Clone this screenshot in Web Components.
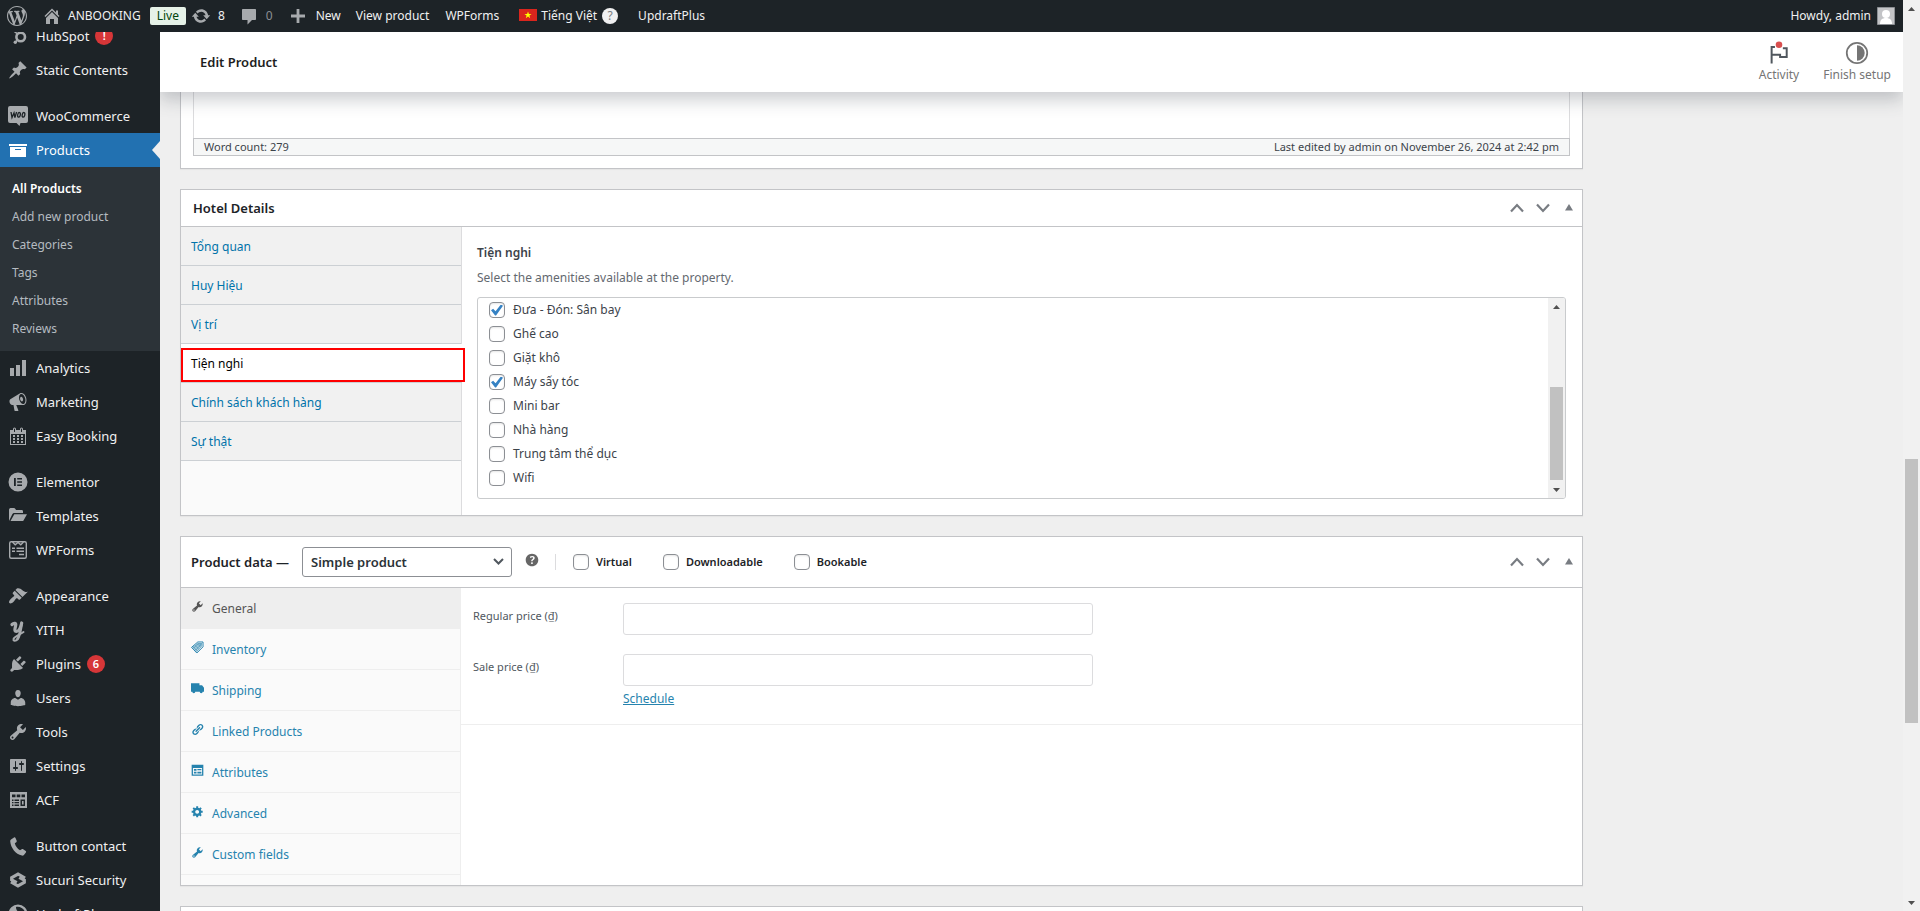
<!DOCTYPE html>
<html lang="en">
<head>
<meta charset="utf-8">
<meta name="viewport" content="width=device-width, initial-scale=1">
<title>Edit Product</title>
<style>
  body { margin: 0; background: #efefef; color: #3c434a; font: 12px/18px "Noto Sans", "Open Sans", sans-serif; }
</style>
</head>
<body>
<admin-app></admin-app>

<script>
const ICONS = {
  wordpress: '<path d="M20 10c0-5.51-4.49-10-10-10C4.48 0 0 4.49 0 10c0 5.52 4.48 10 10 10 5.51 0 10-4.48 10-10zM7.78 15.37L4.37 6.22c.55-.02 1.17-.08 1.17-.08.5-.06.44-1.13-.06-1.11 0 0-1.45.11-2.37.11-.18 0-.37 0-.58-.01C4.12 2.69 6.87 1.11 10 1.11c2.33 0 4.45.87 6.05 2.34-.68-.11-1.65.39-1.65 1.58 0 .74.45 1.36.9 2.1.35.61.55 1.36.55 2.46 0 1.49-1.4 5-1.4 5l-3.03-8.37c.54-.02.82-.17.82-.17.5-.05.44-1.25-.06-1.22 0 0-1.44.12-2.38.12-.87 0-2.33-.12-2.33-.12-.5-.03-.56 1.2-.06 1.22l.92.08 1.26 3.41zM17.41 10c.24-.64.74-1.87.43-4.25.7 1.29 1.05 2.71 1.05 4.25 0 3.29-1.73 6.24-4.4 7.78.97-2.59 1.94-5.2 2.92-7.78zM6.1 18.09C3.12 16.65 1.11 13.53 1.11 10c0-1.3.23-2.48.72-3.59C3.25 10.3 4.67 14.2 6.1 18.09zm4.03-6.63l2.58 6.98c-.86.29-1.76.45-2.71.45-.79 0-1.57-.11-2.29-.33.81-2.38 1.62-4.74 2.42-7.1z"/>',
  home: '<path d="M16 8.5l1.53 1.53-1.06 1.06L10 4.6l-6.47 6.49-1.06-1.06L10 2.5l4 4v-2h2v4zm-6-2.46l6 5.99V18h-4v-5H8v5H4v-5.97z"/>',
  update: '<path d="M10.2 3.28c3.53 0 6.43 2.61 6.92 6h2.08l-3.5 4-3.5-4h2.32c-.45-1.97-2.21-3.45-4.32-3.45-1.45 0-2.73.71-3.54 1.78L4.95 5.66C6.23 4.2 8.11 3.28 10.2 3.28zm-.4 13.44c-3.52 0-6.43-2.61-6.92-6H.8l3.5-4c1.17 1.33 2.33 2.67 3.5 4H5.48c.45 1.97 2.21 3.45 4.32 3.45 1.45 0 2.73-.71 3.54-1.78l1.71 1.95c-1.28 1.46-3.15 2.38-5.25 2.38z"/>',
  comment: '<path d="M4 3h12c.6 0 1 .4 1 1v9c0 .6-.4 1-1 1h-3l-4.500 4.500V14H4c-.6 0-1-.4-1-1V4c0-.6.4-1 1-1z"/>',
  plus: '<path d="M17 8.600v2.800h-5.600V17H8.600v-5.600H3V8.600h5.600V3h2.800v5.600z"/>',
  hubspot: '<circle cx="12.700" cy="11" r="4.300" fill="none" stroke="currentColor" stroke-width="2.600"/><path fill="none" stroke="currentColor" stroke-width="1.600" d="M13 6V2M9.500 8L4 3.500M9.500 14l-2.300 2.300"/><circle cx="7.300" cy="16.300" r="1.700"/><circle cx="13" cy="2" r="1.600"/><circle cx="4" cy="3.500" r="1.600"/>',
  pin: '<path d="M10.44 3.02l1.82-1.82 6.36 6.35-1.83 1.82c-1.05-.68-2.48-.57-3.41.36l-.75.75c-.92.93-1.04 2.35-.35 3.41l-1.83 1.82-2.41-2.41-2.8 2.79c-.42.42-3.38 2.71-3.8 2.29s1.86-3.39 2.28-3.81l2.79-2.79L4.1 9.36l1.83-1.82c1.05.69 2.48.57 3.4-.36l.75-.75c.93-.92 1.05-2.35.36-3.41z"/>',
  woo: '<path d="M2 0h16a2 2 0 0 1 2 2v13a2 2 0 0 1-2 2h-5.500L11.500 20l-3-3H2a2 2 0 0 1-2-2V2a2 2 0 0 1 2-2z"/><g fill="none" stroke="#1d2327" stroke-width="1.300"><path d="M3 6l1 5.500 2-4.500.9 4.500L8.600 6"/><ellipse cx="11" cy="8.800" rx="1.300" ry="2.300" transform="rotate(12 11 8.800)"/><ellipse cx="15.500" cy="8.800" rx="1.300" ry="2.300" transform="rotate(12 15.500 8.800)"/></g>',
  archive: '<path d="M19 4v2H1V4h18zM2 7h16v10H2V7zm11 3V9H7v1h6z"/>',
  chart: '<path d="M18 18V2h-4v16h4zm-6 0V7H8v11h4zm-6 0v-8H2v8h4z"/>',
  megaphone: '<path d="M18.15 5.94c.46 1.62.38 3.22-.02 4.48-.42 1.28-1.26 2.18-2.3 2.48-.16.06-.26.06-.4.06-.06.02-.12.02-.18.02-.06.02-.14.02-.22.02h-6.8l2.22 5.5c.02.14-.06.26-.14.34-.08.1-.24.16-.34.16H6.95c-.1 0-.26-.06-.34-.16-.08-.08-.16-.2-.14-.34l-1-5.5H4.25l-.02-.02c-.5.06-1.08-.18-1.54-.62s-.88-1.08-1.06-1.88c-.24-.8-.2-1.56-.02-2.2.18-.62.58-1.08 1.06-1.3l.02-.02 9-5.4c.1-.06.18-.1.24-.16.06-.04.14-.08.24-.12.16-.08.28-.12.5-.18 1.04-.3 2.24.1 3.22.98s1.84 2.24 2.26 3.86zm-2.58 5.98h-.02c.4-.1.74-.34 1.04-.7.58-.7.86-1.76.86-3.04 0-.64-.1-1.3-.28-1.98-.34-1.36-1.02-2.5-1.78-3.24s-1.68-1.1-2.46-.88c-.82.22-1.4.96-1.7 2-.32 1.04-.28 2.36.06 3.72.38 1.36 1 2.5 1.8 3.24.78.74 1.62 1.1 2.48.88zm-2.54-7.08c.22-.04.42-.02.62.04.38.16.76.48 1.02 1s.42 1.2.42 1.78c0 .3-.04.56-.12.8-.18.48-.44.84-.86.94-.34.1-.8-.06-1.14-.4s-.64-.86-.78-1.5c-.18-.62-.12-1.24.02-1.72s.48-.84.82-.94z"/>',
  calendar: '<path fill-rule="evenodd" d="M15 4h3v15H2V4h3V3a1.500 1.500 0 0 1 3 0v1h4V3a1.500 1.500 0 0 1 3 0v1zM6 3v2.500a.5.5 0 0 0 1 0V3a.5.5 0 0 0-1 0zm7 0v2.500a.5.5 0 0 0 1 0V3a.5.5 0 0 0-1 0zM17 18V8H3v10h14zM7 9v2H5V9h2zm2 0h2v2H9V9zm4 2V9h2v2h-2zm-6 1v2H5v-2h2zm2 0h2v2H9v-2zm4 2v-2h2v2h-2zm-6 1v2H5v-2h2zm4 2H9v-2h2v2zm4 0h-2v-2h2v2z"/>',
  elementor: '<path fill-rule="evenodd" d="M10 .5a9.500 9.500 0 1 0 0 19 9.500 9.500 0 0 0 0-19zM6 6h1.800v8H6zm3.200 0H14v1.600H9.200zm0 3.200H14v1.600H9.200zm0 3.200H14V14H9.200z"/>',
  folder: '<path d="M1 15V4c0-1 .5-2 1.500-2H6c1 0 1.500 1 2 2h5.500c1 0 1.500.5 1.500 1.500V7H6.500C5.500 7 4.800 7.500 4.300 8.300zM6.300 8.300H19l-3.500 6.200c-.2.4-.6.5-1 .5H2.500z"/>',
  wpforms: '<g fill="none" stroke="currentColor" stroke-width="1.400"><rect x="1.700" y="1.700" width="16.600" height="16.600" rx="1.500"/><path d="M4.500 2l2.700 2.800L10 2.500l2.800 2.300L15.500 2M4 8.200h3M8.500 8.200H16M4 11.200h3M8.500 11.200H16M11 14.500h5"/></g>',
  brush: '<path d="M14.48 11.06L7.41 3.99l1.5-1.5c.5-.56 2.3-.47 3.51.32 1.21.8 1.43 1.28 2.91 2.1 1.18.64 2.45 1.26 4.45.85zm-.71.71L6.7 4.7 4.93 6.47c-.39.39-.39 1.02 0 1.41l1.06 1.06c.39.39.39 1.03 0 1.42-.6.6-1.43 1.11-2.21 1.69-.35.26-.7.53-1.01.84C1.43 14.23.4 16.08 1.4 17.07c.99 1 2.84-.03 4.18-1.36.31-.31.58-.66.85-1.02.57-.78 1.08-1.61 1.69-2.21.39-.39 1.02-.39 1.41 0l1.06 1.06c.39.39 1.02.39 1.41 0z"/>',
  yith: '<g fill="none" stroke="currentColor" stroke-linecap="round" stroke-linejoin="round"><path stroke-width="3.200" d="M4 4.500C6 2.500 8.300 3 7.600 6 7 8.500 6 11.500 8.500 11.500c2.500 0 4-3.500 5.200-8.500"/><path stroke-width="2.800" d="M13.700 3.500C12.500 10 12 15.500 9.500 19"/><path stroke-width="2" d="M9.500 19c-1.500 2.500-4.500 2.300-4 .2.500-2.500 5.500-4 10-7.200"/></g>',
  plug: '<path d="M13.11 4.36L9.87 7.6 8 5.73l3.24-3.24c.35-.34 1.05-.2 1.56.32.52.51.66 1.21.31 1.55zm-8 1.77l.91-1.12 9.01 9.01-1.19.84c-.71.71-2.63 1.16-3.82 1.16H6.14L4.9 17.26c-.59.59-1.54.59-2.12 0-.59-.58-.59-1.53 0-2.12l1.24-1.24v-3.88c0-1.13.4-3.19 1.09-3.89zm7.26 3.97l3.24-3.24c.34-.35 1.04-.21 1.55.31.52.51.66 1.21.31 1.55l-3.24 3.25z"/>',
  user: '<path d="M10 9.25c-2.27 0-2.73-3.44-2.73-3.44C7 4.02 7.82 2 9.97 2c2.16 0 2.98 2.02 2.71 3.81 0 0-.41 3.44-2.68 3.44zm0 2.57L12.72 10c2.39 0 4.52 2.33 4.52 4.53v2.49s-3.65 1.13-7.24 1.13c-3.65 0-7.24-1.13-7.24-1.13v-2.49c0-2.25 1.94-4.48 4.47-4.48z"/>',
  wrench: '<path d="M16.68 9.77c-1.34 1.34-3.3 1.67-4.95.99l-5.41 6.52c-.99.99-2.59.99-3.58 0s-.99-2.59 0-3.57l6.52-5.42c-.68-1.65-.35-3.61.99-4.95 1.28-1.28 3.12-1.62 4.72-1.06l-2.89 2.89 2.82 2.82 2.86-2.87c.53 1.58.18 3.39-1.08 4.65zM3.81 16.21c.4.39 1.04.39 1.43 0 .4-.4.4-1.04 0-1.43-.39-.4-1.03-.4-1.43 0-.39.39-.39 1.03 0 1.43z"/>',
  settings: '<path d="M18 16V4c0-.55-.45-1-1-1H3c-.55 0-1 .45-1 1v12c0 .55.45 1 1 1h14c.55 0 1-.45 1-1zM8 11h1c.55 0 1 .45 1 1s-.45 1-1 1H8v1.5c0 .28-.22.5-.5.5s-.5-.22-.5-.5V13H6c-.55 0-1-.45-1-1s.45-1 1-1h1V5.5c0-.28.22-.5.5-.5s.5.22.5.5V11zm5-2h-1c-.55 0-1-.45-1-1s.45-1 1-1h1V5.5c0-.28.22-.5.5-.5s.5.22.5.5V7h1c.55 0 1 .45 1 1s-.45 1-1 1h-1v5.5c0 .28-.22.5-.5.5s-.5-.22-.5-.5V9z"/>',
  acf: '<path d="M2 2h17v16H2z"/><g fill="#1d2327"><path d="M4 4.500h3.500v2.800H4zM8.700 4.500h3.600v2.800H8.700zM13.500 4.500H17v2.800h-3.500zM4 9.500h1.500V11H4zM6.500 9.500H11V11H6.500zM4 12h1.500v1.300H4zM6.500 12H11v1.300H6.500zM4 14.500h1.500V16H4zM6.500 14.500H11V16H6.500zM12.500 9.500H17V16h-4.500z"/></g><path d="M14 11h1.600v3.500H14z"/>',
  phone: '<path d="M3 3.500L6 1.500c.6-.4 1.200-.2 1.500.4l1.200 2.800c.2.6 0 1.100-.4 1.500L6.800 7.300c.8 3 2.600 5.400 5.200 7l1.700-1.100c.5-.3 1-.3 1.500 0l2.500 1.700c.5.4.6 1 .2 1.500l-2 2.600c-.5.6-1.200.8-2 .6C7.500 18 2.800 12 2.200 5.200c0-.7.2-1.300.8-1.700z"/>',
  sucuri: '<path fill="none" stroke="currentColor" stroke-width="3.200" d="M17 8.200L10 4 3.700 7.600v2.200l5 2.900M3 11.800L10 16l6.300-3.600v-2.200l-5-2.900"/>',
  updraft: '<path d="M10 .5a9.500 9.500 0 1 0 0 19 9.500 9.500 0 0 0 0-19zM8 3c4-1 8 2 9 5-2-1-4-1-5 1-2-1-4-3-4-6z" fill-rule="evenodd"/>',
  tag: '<path fill-opacity=".7" d="M2 9.500L10.500 3H17l-.5 6L9 17z"/><path fill="none" stroke="currentColor" stroke-width="1.500" d="M.8 9.800L10.500 1.500H18.500L18.500 9 9 18.500z"/><path fill="none" stroke="#fafafa" stroke-opacity=".6" d="M5 8l7 7M8 5.500l6.500 6.500M5 13l8-8M8 15.500l8-8"/>',
  truck: '<path d="M0 2h13v3h4l3 4v6h-2a2.300 2.300 0 0 1-4.600 0H6.600a2.300 2.300 0 0 1-4.600 0H0z"/>',
  link: '<path d="M17.74 2.76c1.68 1.69 1.68 4.41 0 6.1l-1.53 1.52c-1.12 1.12-2.7 1.47-4.14 1.09l2.62-2.61.76-.77.76-.76c.84-.84.84-2.2 0-3.04-.84-.85-2.2-.85-3.04 0l-.77.76-3.38 3.38c-.37-1.44-.02-3.02 1.1-4.14l1.52-1.53c1.69-1.68 4.42-1.68 6.1 0zM8.59 13.43l5.34-5.34c.42-.42.42-1.1 0-1.52-.44-.43-1.13-.39-1.53 0l-5.33 5.34c-.42.42-.42 1.1 0 1.52.44.43 1.13.39 1.52 0zm-.76 2.29l4.14-4.15c.38 1.44.03 3.02-1.09 4.14l-1.52 1.53c-1.69 1.68-4.41 1.68-6.1 0-1.68-1.68-1.68-4.42 0-6.1l1.53-1.52c1.12-1.12 2.7-1.47 4.14-1.1l-4.14 4.15c-.85.84-.85 2.2 0 3.05.84.84 2.2.84 3.04 0z"/>',
  card: '<path fill-rule="evenodd" d="M1 1h18v17H1zm2 5v10h14V6z"/><path d="M4.500 7.500H8.500v3H4.500zM9.800 7.500H16v2.200H9.800zM4.500 12h4v2.500h-4zM9.800 12H16v2.500H9.800z"/>',
  gear: '<path fill-rule="evenodd" d="M18 12h-2.18c-.17.7-.44 1.35-.81 1.93l1.54 1.54-2.1 2.1-1.54-1.54c-.58.36-1.23.63-1.91.79V19H8v-2.18c-.68-.16-1.33-.43-1.91-.79l-1.54 1.54-2.12-2.12 1.54-1.54c-.36-.58-.63-1.23-.79-1.91H1V9.03h2.17c.16-.7.44-1.35.8-1.94L2.43 5.55l2.1-2.1 1.54 1.54c.58-.37 1.24-.64 1.93-.81V2h3v2.18c.68.16 1.33.43 1.91.79l1.54-1.54 2.12 2.12-1.54 1.54c.36.59.64 1.24.8 1.94H18V12zm-8.5 1.5c1.66 0 3-1.34 3-3s-1.34-3-3-3-3 1.34-3 3 1.34 3 3 3z"/>',
  help: '<path d="M17 10c0-3.87-3.14-7-7-7-3.87 0-7 3.13-7 7s3.13 7 7 7c3.86 0 7-3.13 7-7zm-6.3 1.48H9.14v-.43c0-.38.08-.7.24-.98s.46-.57.88-.89c.41-.29.68-.53.81-.71.14-.18.2-.39.2-.62 0-.25-.09-.44-.28-.58-.19-.13-.45-.19-.79-.19-.58 0-1.25.19-2 .57l-.64-1.28c.87-.49 1.8-.74 2.77-.74.81 0 1.45.2 1.92.58.48.39.71.91.71 1.55 0 .43-.09.8-.29 1.11-.19.32-.57.67-1.11 1.06-.38.28-.61.49-.71.63-.1.15-.15.34-.15.57v.35zm-1.47 2.74c-.18-.17-.27-.42-.27-.73 0-.33.08-.58.26-.75s.43-.25.77-.25c.32 0 .57.09.75.26s.27.42.27.74c0 .3-.09.55-.27.72-.18.18-.43.27-.75.27-.33 0-.58-.09-.76-.26z"/>',
  up: '<path fill="none" stroke="currentColor" stroke-width="2.200" d="M4 13.500L10 7l6 6.500"/>',
  down: '<path fill="none" stroke="currentColor" stroke-width="2.200" d="M4 6.500L10 13l6-6.500"/>',
  triangle: '<path d="M6 12.500L10 6l4 6.500z"/>',
  flag: '<path fill="none" stroke="currentColor" stroke-width="1.800" d="M3.300 3.600v16M3.300 4.500h3M3.300 11.500H11v2.200h6V5.600h-3.500"/><circle cx="10" cy="2.500" r="3" fill="#d94f4f"/>',
  half: '<circle cx="10" cy="10" r="9.300" fill="none" stroke="currentColor" stroke-width="1.600"/><path d="M10 3a7 7 0 0 1 0 14z"/>'
};

/* Fills an open shadow root with a style sheet and markup. */
class Part extends HTMLElement {
  paint(css, html) {
    const t = document.createElement('template');
    t.innerHTML = `<style>*,*::before,*::after{box-sizing:border-box}a{color:inherit;text-decoration:none}ul{list-style:none;margin:0;padding:0}${css}</style>${html}`;
    this.attachShadow({ mode: 'open' }).append(t.content.cloneNode(true));
  }
}
const define = (name, build) => customElements.define(name, class extends Part {
  connectedCallback() { if (!this.shadowRoot) this.paint(...build(this)); }
});

define('wp-icon', el => [
  `:host{display:inline-flex;flex:none;width:20px;height:20px}svg{width:100%;height:100%;overflow:visible}`,
  `<svg viewBox="0 0 20 20" fill="currentColor" aria-hidden="true">${ICONS[el.getAttribute('name')] || ''}</svg>`
]);

/* Vertical scroll bar; --before, --thumb and --after share out the track. */
define('scroll-bar', () => [
  `:host{display:flex;flex-direction:column;flex:none;width:17px;background:#f1f1f1;color:#505050}
   .arrow{flex:none;height:17px;display:grid;place-items:center}
   svg{width:7px;height:4px}
   .before{flex:var(--before) 1 0}.after{flex:var(--after) 1 0}
   .thumb{flex:var(--thumb) 1 0;margin:0 2px;background:#c1c1c1}`,
  `<div class="arrow"><svg viewBox="0 0 7 4" fill="currentColor"><path d="M0 4L3.500 0 7 4z"/></svg></div>
   <div class="before"></div><div class="thumb"></div><div class="after"></div>
   <div class="arrow"><svg viewBox="0 0 7 4" fill="currentColor"><path d="M0 0h7L3.500 4z"/></svg></div>`
]);

define('admin-bar', () => [
  `:host{display:flex;align-items:center;height:32px;padding:0 8px 0 7px;background:#1d2327;color:#f0f0f1;font-size:12px;line-height:32px;white-space:nowrap}
   a{display:flex;align-items:center}
   wp-icon{color:#a7aaad}
   .home{margin-left:15px;gap:6px}
   .live{height:18px;padding:0 7px;margin-left:9px;border-radius:2px;background:#e6f2e8;color:#00450c;line-height:18px}
   .update{margin-left:5px;gap:7px}
   .comments{margin-left:14px;gap:7px;color:#8c8f94}
   .new{margin-left:15px;gap:8px}
   .view{margin-left:15px}
   .forms{margin-left:16px}
   .lang{gap:4px;margin-left:20px}
   .lang svg{width:18px;height:12px;margin-bottom:3px}
   .q{display:grid;place-items:center;width:16px;height:16px;margin-left:1px;border-radius:50%;background:#f0f0f1;color:#787c82;line-height:16px}
   .plus{margin-left:20px}
   .me{margin-left:auto;gap:6px}
   .me svg{width:18px;height:18px}`,
  `<a href="#" aria-label="About WordPress"><wp-icon name="wordpress"></wp-icon></a>
   <a class="home" href="#"><wp-icon name="home"></wp-icon>ANBOOKING</a>
   <a class="live" href="#">Live</a>
   <a class="update" href="#"><wp-icon name="update"></wp-icon>8</a>
   <a class="comments" href="#"><wp-icon name="comment"></wp-icon>0</a>
   <a class="new" href="#"><wp-icon name="plus"></wp-icon>New</a>
   <a class="view" href="#">View product</a>
   <a class="forms" href="#">WPForms</a>
   <a class="lang" href="#"><svg viewBox="0 0 18 12"><path fill="#da251d" d="M0 0h18v12H0z"/><path fill="#ff0" d="M9 2.400l.9 2.600h2.700l-2.200 1.600.8 2.600L9 7.600 6.800 9.200l.8-2.600L5.400 5h2.700z"/></svg>Tiếng Việt<span class="q">?</span></a>
   <a class="plus" href="#">UpdraftPlus</a>
   <a class="me" href="#">Howdy, admin<svg viewBox="0 0 18 18"><path fill="#c3c4c7" stroke="#8c8f94" d="M.5.5h17v17H.5z"/><circle cx="9" cy="7" r="4" fill="#fff"/><path fill="#fff" d="M3 17c0-4 2-6 6-6s6 2 6 6z"/></svg></a>`
]);

define('menu-item', el => [
  `:host{display:flex;flex:none}
   :host([gap]){margin-top:12px}
   a{position:relative;flex:1;display:flex;align-items:center;height:34px;padding-left:8px;gap:8px;font-size:13px;line-height:18px;color:#f0f0f1;white-space:nowrap}
   wp-icon{color:#a7aaad}
   :host([current]) a{background:#2271b1;color:#fff}
   :host([current]) wp-icon{color:#fff}
   :host([current]) a::after{content:"";position:absolute;right:0;top:8px;border:9px solid transparent;border-left-width:0;border-right:8px solid #efefef}
   b{width:18px;height:18px;margin-left:-2px;border-radius:50%;background:#d63638;color:#fff;font-size:11px;font-weight:600;text-align:center}`,
  `<a href="#"><wp-icon name="${el.getAttribute('icon')}"></wp-icon><slot></slot>${el.hasAttribute('badge') ? `<b>${el.getAttribute('badge')}</b>` : ''}</a>`
]);

const item = ([icon, label, attrs = '']) => `<menu-item icon="${icon}" ${attrs}>${label}</menu-item>`;
define('admin-menu', () => [
  `:host{display:block;overflow:hidden;background:#1d2327}
   nav{display:flex;flex-direction:column;margin-top:-13px}
   ul{padding:8px 0;background:#2c3338;font-size:12px}
   li a{display:block;padding:5px 12px;color:#b5bbc0}
   .on{color:#fff;font-weight:600}`,
  `<nav>${[['hubspot', 'HubSpot', 'badge="!"'], ['pin', 'Static Contents'], ['woo', 'WooCommerce', 'gap'], ['archive', 'Products', 'current']].map(item).join('')}
   <ul><li><a class="on" href="#">All Products</a></li>${['Add new product', 'Categories', 'Tags', 'Attributes', 'Reviews'].map(t => `<li><a href="#">${t}</a></li>`).join('')}</ul>
   ${[['chart', 'Analytics'], ['megaphone', 'Marketing'], ['calendar', 'Easy Booking'], ['elementor', 'Elementor', 'gap'], ['folder', 'Templates'], ['wpforms', 'WPForms'], ['brush', 'Appearance', 'gap'], ['yith', 'YITH'], ['plug', 'Plugins', 'badge="6"'], ['user', 'Users'], ['wrench', 'Tools'], ['settings', 'Settings'], ['acf', 'ACF'], ['phone', 'Button contact', 'gap'], ['sucuri', 'Sucuri Security'], ['updraft', 'UpdraftPlus']].map(item).join('')}</nav>`
]);

define('page-header', () => [
  `:host{position:relative;z-index:1;display:flex;align-items:center;flex:none;height:60px;padding:0 12px 0 40px;background:#fff;box-shadow:0 8px 16px rgba(85,93,102,.3)}
   h1{flex:1;margin:0;color:#1e1e1e;font-size:13px;font-weight:600}
   button{display:flex;flex-direction:column;align-items:center;gap:2px;margin-left:24px;padding:2px 0 0;border:0;background:none;color:#757575;font:inherit}
   wp-icon{width:22px;height:22px}
   .flag{color:#50575e}`,
  `<h1>Edit Product</h1>
   <button type="button"><wp-icon class="flag" name="flag"></wp-icon>Activity</button>
   <button type="button"><wp-icon name="half"></wp-icon>Finish setup</button>`
]);

/* Post box: a titled card; the "title" slot holds the heading row. */
define('meta-box', () => [
  `:host{display:block;border:1px solid #c3c4c7;background:#fff;box-shadow:0 1px 1px rgba(0,0,0,.04)}
   header{display:flex;align-items:center;min-height:37px;padding-left:11px;border-bottom:1px solid #c3c4c7;color:#1d2327}
   :host([tall]) header{min-height:51px}
   slot[name=title]{display:flex;flex:1}
   button{display:flex;justify-content:center;width:26px;padding:0;border:0;background:none;color:#787c82}`,
  `<header><slot name="title"></slot>
   <button type="button" aria-label="Move up"><wp-icon name="up"></wp-icon></button>
   <button type="button" aria-label="Move down"><wp-icon name="down"></wp-icon></button>
   <button type="button" aria-label="Toggle panel"><wp-icon name="triangle"></wp-icon></button></header><slot></slot>`
]);

define('editor-box', () => [
  `:host{display:flex;flex-direction:column;height:77px;padding:0 12px 12px;border:solid #c3c4c7;border-width:0 1px 1px;background:#fff;box-shadow:0 1px 1px rgba(0,0,0,.04)}
   .area{flex:1;border:solid #dcdcde;border-width:0 1px}
   .status{display:flex;justify-content:space-between;padding:0 10px;border:1px solid #c3c4c7;background:#f6f7f7;font-size:11px;line-height:16px}`,
  `<div class="area"></div><div class="status"><span>Word count: 279</span><span>Last edited by admin on November 26, 2024 at 2:42 pm</span></div>`
]);

const CHECKBOX = `input[type=checkbox]{appearance:none;display:grid;place-items:center;flex:none;width:16px;height:16px;margin:0;border:1px solid #8c8f94;border-radius:4px;background:#fff;box-shadow:inset 0 1px 2px rgba(0,0,0,.1)}
   input[type=checkbox]:checked::before{content:"";width:12px;height:11px;background:#3582c4;clip-path:polygon(0 52%,18% 38%,38% 62%,82% 0,100% 12%,42% 100%,34% 100%)}`;

define('hotel-details', () => [
  `:host{display:flex;line-height:18px}
   nav{width:281px;flex:none;background:#fafafa;border-right:1px solid #dcdcde}
   li a{position:relative;display:block;height:39px;padding:11px 10px 0;border-bottom:1px solid #ccd0d4;background:#f1f1f1;color:#0073aa}
   li a.on{z-index:1;margin-right:-1px;background:#fff;color:#000}
   .on::after{content:"";position:absolute;top:4px;left:0;width:284px;height:34px;border:2px solid #f00}
   section{flex:1;min-width:0;padding:17px 16px 16px 15px}
   h3{margin:0;font-size:12px;font-weight:600;line-height:18px}
   p{margin:7px 0 10px;color:#646970}
   .list{display:flex;border:1px solid #c9cbcd;border-radius:3px;overflow:hidden}
   ul{flex:1}
   .list ul{padding:0 11px 8px}
   .list li{display:flex;align-items:center;gap:8px;height:24px}
   scroll-bar{--before:72;--thumb:93;--after:1}
   ${CHECKBOX}`,
  `<nav><ul>${['Tổng quan', 'Huy Hiệu', 'Vị trí', 'Tiện nghi', 'Chính sách khách hàng', 'Sự thật'].map((t, i) => `<li><a href="#"${i === 3 ? ' class="on"' : ''}>${t}</a></li>`).join('')}</ul></nav>
   <section><h3>Tiện nghi</h3><p>Select the amenities available at the property.</p>
   <div class="list"><ul>${['Đưa - Đón: Sân bay', 'Ghế cao', 'Giặt khô', 'Máy sấy tóc', 'Mini bar', 'Nhà hàng', 'Trung tâm thể dục', 'Wifi'].map((t, i) => `<li><input type="checkbox" id="a${i}"${i === 0 || i === 3 ? ' checked' : ''}><label for="a${i}">${t}</label></li>`).join('')}</ul><scroll-bar></scroll-bar></div></section>`
]);

define('product-type', () => [
  `:host{display:flex;flex:1;align-items:center;color:#1d2327;font-weight:600;white-space:nowrap}
   h2{width:111px;margin:0;font-size:13px;font-weight:600}
   .select{position:relative;display:flex;width:210px}
   select{appearance:none;flex:1;height:30px;margin:0;padding:0 24px 0 8px;border:1px solid #8c8f94;border-radius:3px;background:#fff;color:#2c3338;font:600 13px/28px "Noto Sans","Open Sans",sans-serif}
   .select svg{position:absolute;right:8px;top:11px;width:11px;height:8px;pointer-events:none}
   .help{width:18px;height:18px;margin:-4px 14px 0 11px;color:#666}
   .sep{width:1px;height:16px;margin-right:17px;background:#dcdcde}
   .check{display:flex;align-items:center;gap:7px;margin-right:31px;font-size:11px}
   ${CHECKBOX}`,
  `<h2>Product data —</h2>
   <span class="select"><select aria-label="Product type"><option>Simple product</option></select><svg viewBox="0 0 11 8"><path fill="none" stroke="#50575e" stroke-width="2" d="M1 1l4.500 4.500L10 1"/></svg></span>
   <wp-icon class="help" name="help"></wp-icon><span class="sep"></span>
   ${['Virtual', 'Downloadable', 'Bookable'].map(t => `<span class="check"><input type="checkbox" id="${t}"><label for="${t}">${t}</label></span>`).join('')}`
]);

define('product-data', () => [
  `:host{display:flex}
   nav{flex:none;width:280px;padding-bottom:10px;border-right:1px solid #eee;background:#fafafa}
   li a{display:flex;align-items:center;gap:8px;height:41px;padding:2px 10px 0;border-bottom:1px solid #eee;color:#2683ae}
   li a.on{background:#eee;color:#555}
   wp-icon{width:13px;height:13px;margin-bottom:5px}
   section{flex:1;min-width:0}
   form{padding:15px 12px 16px;border-bottom:1px solid #eee;color:#50575e;font-size:11px}
   .field{display:grid;grid-template-columns:150px minmax(0,470px);align-items:start}
   .field + .field{margin-top:19px}
   label{padding-top:4px}
   input{height:32px;border:1px solid #dcdcde;border-radius:3px;background:#fff;font:12px "Noto Sans",sans-serif}
   .field a{grid-column:2;justify-self:start;margin-top:4px;color:#2683ae;font-size:12px;text-decoration:underline}`,
  `<nav><ul>${[['wrench', 'General'], ['tag', 'Inventory'], ['truck', 'Shipping'], ['link', 'Linked Products'], ['card', 'Attributes'], ['gear', 'Advanced'], ['wrench', 'Custom fields']].map(([ic, t], i) => `<li><a href="#"${i ? '' : ' class="on"'}><wp-icon name="${ic}"></wp-icon>${t}</a></li>`).join('')}</ul></nav>
   <section><form>
     <div class="field"><label for="regular">Regular price (₫)</label><input id="regular" type="text"></div>
     <div class="field"><label for="sale">Sale price (₫)</label><input id="sale" type="text"><a href="#">Schedule</a></div>
   </form></section>`
]);

define('admin-app', () => [
  `:host{display:grid;grid-template-columns:minmax(0,1fr) 17px;height:100vh;overflow:hidden}
   .page{display:grid;grid-template:32px minmax(0,1fr) / 160px minmax(0,1fr);min-height:0}
   admin-bar{grid-column:1 / -1}
   .body{display:flex;flex-direction:column;min-height:0;overflow:hidden}
   main{display:flex;flex-direction:column;gap:20px;padding:0 320px 0 20px}
   main > *{flex:none}
   h2{margin:0;padding-left:1px;font-size:13px;font-weight:600}
   product-type{margin-left:-1px}
   scroll-bar{--before:442;--thumb:264;--after:171}`,
  `<div class="page"><admin-bar></admin-bar><admin-menu></admin-menu>
   <div class="body"><page-header></page-header>
   <main><editor-box></editor-box>
   <meta-box><h2 slot="title">Hotel Details</h2><hotel-details></hotel-details></meta-box>
   <meta-box tall><product-type slot="title"></product-type><product-data></product-data></meta-box>
   <meta-box></meta-box></main></div></div><scroll-bar></scroll-bar>`
]);
</script>
</body>
</html>
